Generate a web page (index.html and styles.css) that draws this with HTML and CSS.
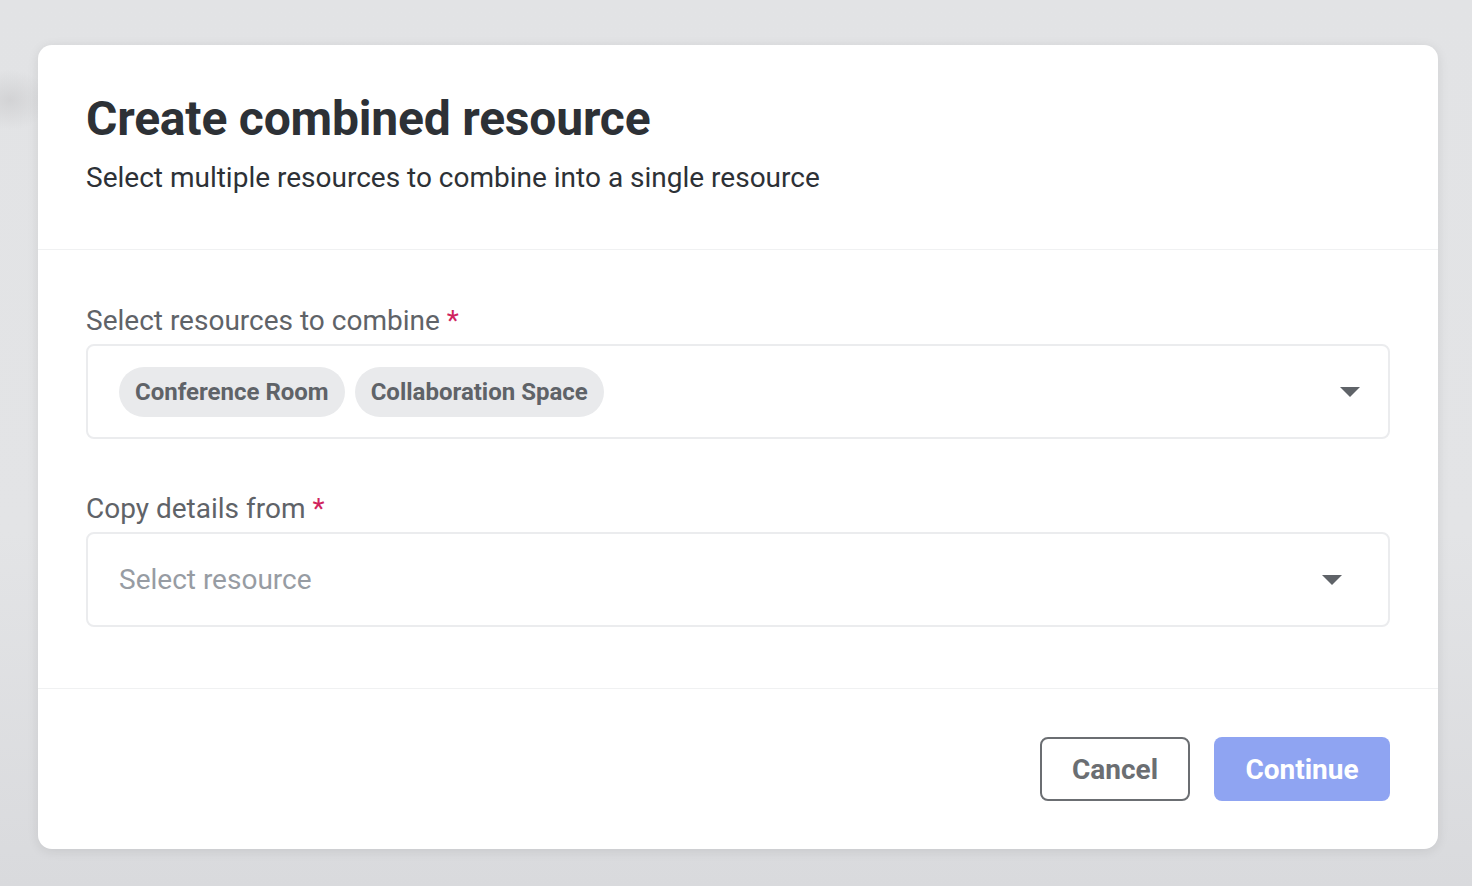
FILE: index.html
```html
<!DOCTYPE html>
<html lang="en">
<head>
  <meta charset="UTF-8">
  <meta name="viewport" content="width=device-width, initial-scale=1.0">
  <title>Create combined resource</title>
  <link rel="stylesheet" href="styles.css">
</head>
<body>
  <div class="backdrop">
    <div class="modal">
      <div class="modal-header">
        <h1>Create combined resource</h1>
        <p class="subtitle">Select multiple resources to combine into a single resource</p>
      </div>

      <div class="modal-body">
        <div class="field">
          <label class="field-label">Select resources to combine <span class="req">*</span></label>
          <div class="select multi">
            <div class="chips">
              <span class="chip">Conference Room</span>
              <span class="chip">Collaboration Space</span>
            </div>
            <svg class="caret" width="20" height="10" viewBox="0 0 20 10"><path d="M0 0h20L10 10z" fill="#5f6368"/></svg>
          </div>
        </div>

        <div class="field">
          <label class="field-label">Copy details from <span class="req">*</span></label>
          <div class="select single">
            <span class="placeholder">Select resource</span>
            <svg class="caret" width="20" height="10" viewBox="0 0 20 10"><path d="M0 0h20L10 10z" fill="#5f6368"/></svg>
          </div>
        </div>
      </div>

      <div class="modal-footer">
        <button class="btn btn-outline">Cancel</button>
        <button class="btn btn-primary">Continue</button>
      </div>
    </div>
  </div>
</body>
</html>
```

FILE: styles.css
```css
* {
  box-sizing: border-box;
}
body {
  margin: 0;
  font-family: Roboto, 'Liberation Sans', sans-serif;
  background: #e0e1e3;
  min-height: 100vh;
}
.backdrop {
  min-height: 886px;
  padding: 45px 34px 37px 38px;
  background:
    radial-gradient(ellipse 40px 30px at 10px 100px, rgba(200,200,202,0.6), transparent),
    linear-gradient(to bottom, #e2e3e5 0%, #e3e4e6 60%, #d9dadd 100%);
}
.modal {
  background: #fff;
  border-radius: 14px;
  box-shadow: 0 2px 12px rgba(0,0,0,0.09);
  width: 1400px;
  overflow: hidden;
}

/* header */
.modal-header {
  padding: 47px 48px 53px 48px;
  border-bottom: 1px solid #f0f1f2;
}
.modal-header h1 {
  margin: 0;
  font-size: 48px;
  font-weight: 700;
  color: #2d3136;
  line-height: 54px;
  letter-spacing: -0.2px;
}
.subtitle {
  margin: 14px 0 0;
  font-size: 28px;
  line-height: 36px;
  color: #2d3136;
}

/* body */
.modal-body {
  padding: 53px 48px 61px 48px;
  border-bottom: 1px solid #f0f1f2;
}
.field + .field {
  margin-top: 52px;
}
.field-label {
  display: block;
  font-size: 28px;
  line-height: 36px;
  color: #5f6368;
  margin-bottom: 5px;
}
.req {
  color: #d0245e;
}
.select {
  display: flex;
  align-items: center;
  justify-content: space-between;
  height: 95px;
  border: 2px solid #ebecee;
  border-radius: 8px;
}
.select.multi {
  padding: 0 28px 0 31px;
}
.select.single {
  padding: 0 46px 0 31px;
}
.chips {
  display: flex;
  gap: 10px;
}
.chip {
  display: inline-block;
  height: 50px;
  line-height: 50px;
  padding: 0 16px;
  border-radius: 25px;
  background: #e9eaec;
  color: #5f6368;
  font-size: 24px;
  font-weight: 700;
}
.placeholder {
  font-size: 28px;
  color: #979ca3;
}
.caret {
  display: block;
}

/* footer */
.modal-footer {
  display: flex;
  justify-content: flex-end;
  gap: 24px;
  padding: 48px;
}
.btn {
  height: 64px;
  border-radius: 8px;
  font-family: Roboto, 'Liberation Sans', sans-serif;
  font-size: 28px;
  font-weight: 700;
  cursor: pointer;
}
.btn-outline {
  width: 150px;
  background: #fff;
  border: 2px solid #6b6e72;
  color: #6b6e72;
}
.btn-primary {
  width: 176px;
  background: #8fa4f2;
  border: none;
  color: #fff;
}
```
